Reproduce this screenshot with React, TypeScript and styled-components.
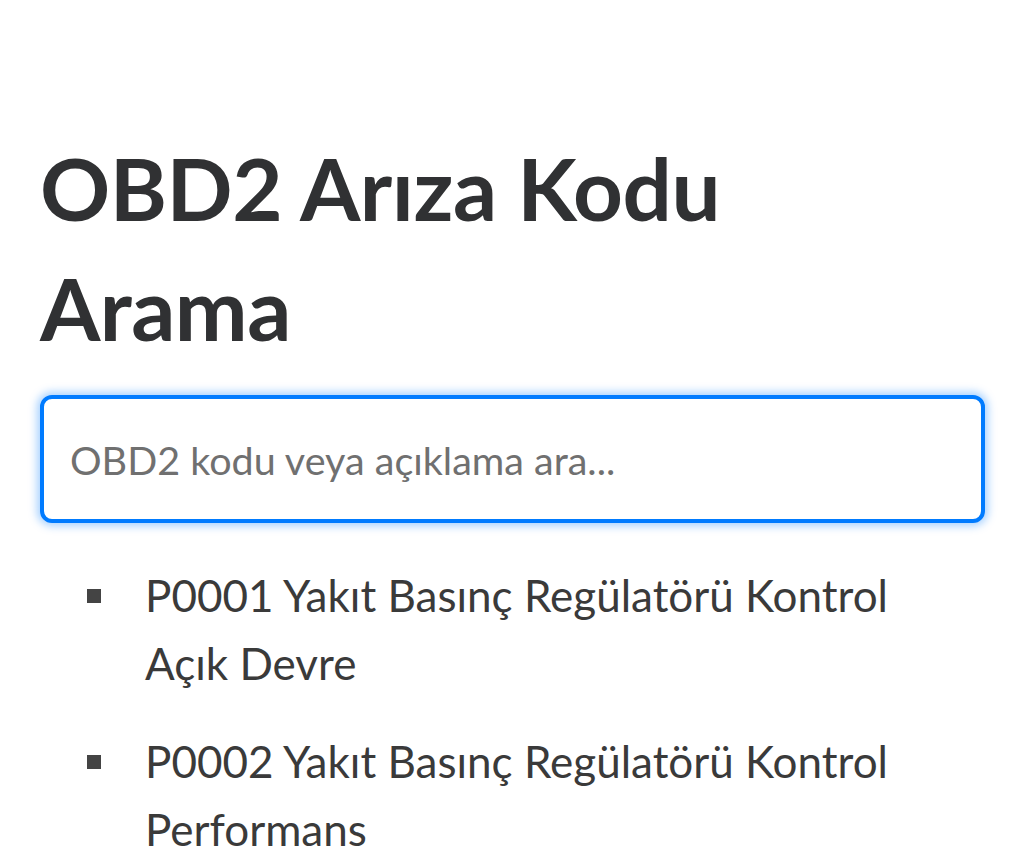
import { createGlobalStyle } from "styled-components"
import styled from "styled-components"

const GlobalStyle = createGlobalStyle`
  html, body {
    margin: 0;
    padding: 0;
    background: #ffffff;
  }
  body {
    font-family: "Lato", "Noto Sans", sans-serif;
    color: #333333;
  }
`

const Page = styled.main`
  padding: 128px 39px 0 40px;
`

const Title = styled.h1`
  margin: 0 0 27px;
  font-size: 87px;
  line-height: 120px;
  font-weight: 700;
  color: #303133;
  letter-spacing: -0.5px;
`

const SearchInput = styled.input`
  display: block;
  box-sizing: border-box;
  width: 100%;
  height: 128px;
  padding: 0 26px;
  border: 4px solid #007bff;
  border-radius: 12px;
  box-shadow: 0 0 8px 3px rgba(0, 123, 255, 0.35);
  outline: none;
  font-family: "Lato", "Noto Sans", sans-serif;
  font-size: 39.5px;
  color: #495057;
  background: #ffffff;

  &::placeholder {
    color: #707070;
  }
`

const CodeList = styled.ul`
  margin: 38px 0 0;
  padding: 0 40px 0 47px;
  list-style: none;
`

const CodeItem = styled.li`
  display: flex;
  align-items: flex-start;
  margin-bottom: 30px;
  font-size: 44px;
  line-height: 68px;
  color: #3a3a3a;

  &::before {
    content: "";
    flex: 0 0 14px;
    height: 14px;
    margin: 28px 44px 0 0;
    background: #444444;
  }
`

const codes = [
  "P0001 Yakıt Basınç Regülatörü Kontrol Açık Devre",
  "P0002 Yakıt Basınç Regülatörü Kontrol Performans",
]

export default function App() {
  return (
    <>
      <GlobalStyle />
      <Page>
        <Title>OBD2 Arıza Kodu Arama</Title>
        <SearchInput placeholder="OBD2 kodu veya açıklama ara..." autoFocus />
        <CodeList>
          {codes.map((code) => (
            <CodeItem key={code}>{code}</CodeItem>
          ))}
        </CodeList>
      </Page>
    </>
  )
}
